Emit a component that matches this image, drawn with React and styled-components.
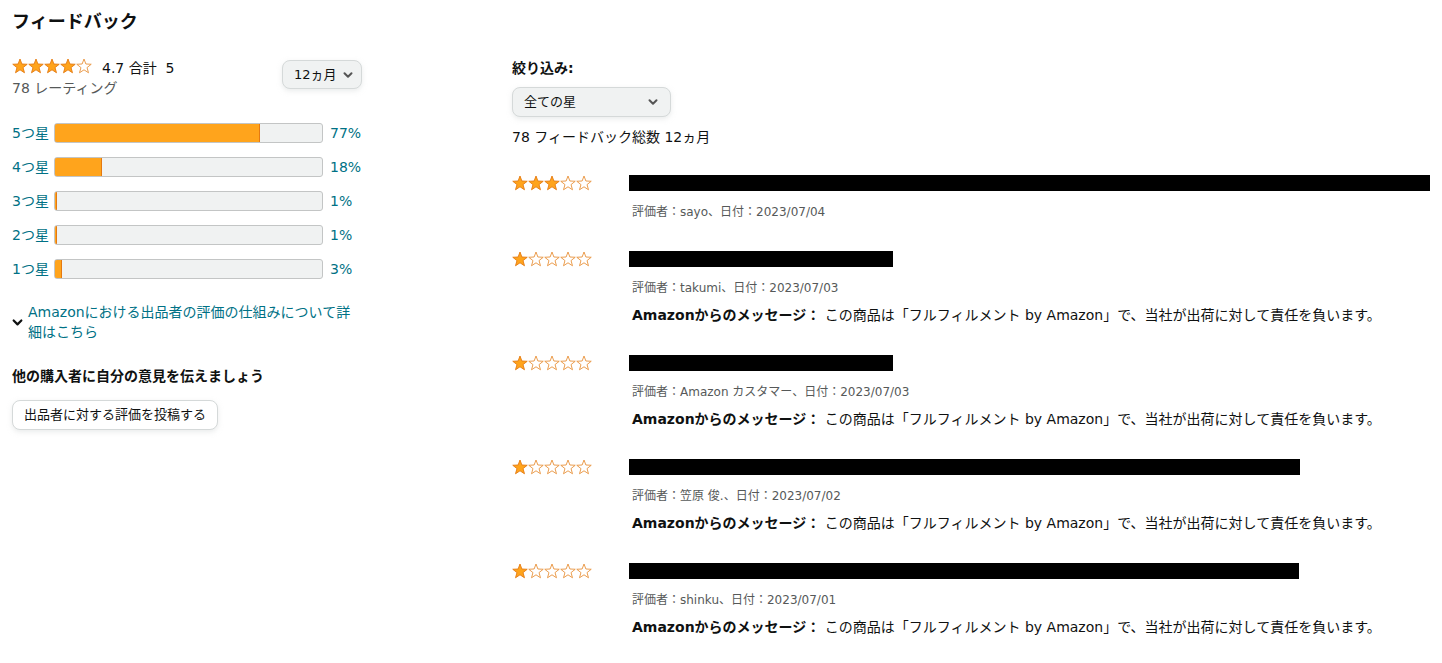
import React from "react"
import styled, { createGlobalStyle } from "styled-components"

const GlobalStyle = createGlobalStyle`
  html, body {
    margin: 0;
    padding: 0;
    background: #fff;
  }
  body {
    font-family: "DejaVu Sans", "Noto Sans CJK JP", sans-serif;
    color: #0F1111;
    font-size: 14px;
    line-height: 20px;
  }
`

const histogram = [
  { label: "5つ星", pct: 77 },
  { label: "4つ星", pct: 18 },
  { label: "3つ星", pct: 1 },
  { label: "2つ星", pct: 1 },
  { label: "1つ星", pct: 3 }
];

const MESSAGE = "この商品は「フルフィルメント by Amazon」で、当社が出荷に対して責任を負います。";

const reviews = [
  { stars: 3, redacted: 801, meta: "評価者：sayo、日付：2023/07/04", message: false },
  { stars: 1, redacted: 264, meta: "評価者：takumi、日付：2023/07/03", message: true },
  { stars: 1, redacted: 264, meta: "評価者：Amazon カスタマー、日付：2023/07/03", message: true },
  { stars: 1, redacted: 671, meta: "評価者：笠原 俊.、日付：2023/07/02", message: true },
  { stars: 1, redacted: 670, meta: "評価者：shinku、日付：2023/07/01", message: true }
];

const STAR = "8,1 9.88,6.01 15.23,6.25 11.04,9.59 12.47,14.75 8,11.8 3.53,14.75 4.96,9.59 0.77,6.25 6.12,6.01";

const Star = ({ filled }) => (
  <svg width="16" height="16" viewBox="0 0 16 16">
    <polygon points={ STAR }
      fill={ filled ? "#FFA41C" : "#fff" }
      stroke={ filled ? "#E47911" : "#E8923B" }
      strokeWidth="0.9"
      strokeLinejoin="round"/>
  </svg>
)

const Stars = ({ count }) => (
  <StarRow>
    { [0, 1, 2, 3, 4].map(i => <Star key={ i } filled={ i < count }/>) }
  </StarRow>
)

const Chevron = ({ size = 10 }) => (
  <svg width={ size } height={ size } viewBox="0 0 10 10">
    <path d="M1.5 3.2 L5 6.7 L8.5 3.2" fill="none" stroke="currentColor"
      strokeWidth="2" strokeLinecap="round" strokeLinejoin="round"/>
  </svg>
)

const App = () => (
  <>
    <GlobalStyle/>
    <Page>
      <Title>フィードバック</Title>
      <Columns>
        <Left>
          <Summary>
            <div>
              <RatingLine>
                <Stars count={ 4 }/>
                <span>4.7 合計&nbsp; 5</span>
              </RatingLine>
              <Muted>78 レーティング</Muted>
            </div>
            <DropButton $w={ 80 } $h={ 29 }>
              <span>12ヵ月</span>
              <Chevron/>
            </DropButton>
          </Summary>

          <Histogram>
            { histogram.map(h =>
              <HistRow key={ h.label }>
                <HistLabel>{ h.label }</HistLabel>
                <Track>
                  <Fill style={ { width: `${ Math.max(h.pct, 1) }%` } }/>
                </Track>
                <HistPct>{ h.pct }%</HistPct>
              </HistRow>
            ) }
          </Histogram>

          <Expander>
            <ExpanderIcon><Chevron size={ 11 }/></ExpanderIcon>
            <LinkText>Amazonにおける出品者の評価の仕組みについて詳細はこちら</LinkText>
          </Expander>

          <SubHeading>他の購入者に自分の意見を伝えましょう</SubHeading>
          <div>
            <PlainButton>出品者に対する評価を投稿する</PlainButton>
          </div>
        </Left>

        <Right>
          <SubHeading $tight>絞り込み:</SubHeading>
          <FilterWrap>
            <DropButton $w={ 159 } $h={ 30 } $pad={ 12 }>
              <span>全ての星</span>
              <Chevron/>
            </DropButton>
          </FilterWrap>
          <Total>78 フィードバック総数 12ヵ月</Total>

          <ReviewList>
            { reviews.map((r, i) =>
              <Review key={ i }>
                <Stars count={ r.stars }/>
                <ReviewBody>
                  <Redacted $w={ r.redacted }/>
                  <Meta>{ r.meta }</Meta>
                  { r.message &&
                    <Message><b>Amazonからのメッセージ：</b> { MESSAGE }</Message>
                  }
                </ReviewBody>
              </Review>
            ) }
          </ReviewList>
        </Right>
      </Columns>
    </Page>
  </>
)
export default App;

const Page = styled.div`
  padding: 9px 12px 0 12px;
`
const Title = styled.h2`
  margin: 0;
  font-size: 18px;
  line-height: 26px;
  font-weight: 700;
`
const Columns = styled.div`
  display: grid;
  grid-template-columns: 350px 1fr;
  column-gap: 150px;
  margin-top: 23px;
`
const Left = styled.div`
  display: flex;
  flex-direction: column;
`
const Summary = styled.div`
  display: flex;
  justify-content: space-between;
  align-items: flex-start;
`
const RatingLine = styled.div`
  display: flex;
  align-items: center;
  gap: 10px;
  height: 20px;
`
const StarRow = styled.span`
  display: inline-flex;
  align-self: flex-start;
  svg { display: block; }
`
const Muted = styled.div`
  color: #565959;
  line-height: 20px;
`
const DropButton = styled.div`
  display: flex;
  align-items: center;
  justify-content: space-between;
  box-sizing: border-box;
  width: ${ p => p.$w }px;
  height: ${ p => p.$h }px;
  margin-top: 2px;
  padding: 0 ${ p => p.$pad || 8 }px 0 11px;
  background: #F0F2F2;
  border: 1px solid #D5D9D9;
  border-radius: 8px;
  box-shadow: 0 2px 5px 0 rgba(213, 217, 217, .5);
  font-size: 13px;
  color: #0F1111;
  svg { color: #555; }
`
const Histogram = styled.div`
  display: flex;
  flex-direction: column;
  margin-top: 18px;
`
const HistRow = styled.div`
  display: flex;
  align-items: center;
  height: 34px;
  color: #007185;
`
const HistLabel = styled.span`
  width: 42px;
  flex: none;
`
const Track = styled.div`
  box-sizing: border-box;
  width: 269px;
  height: 20px;
  background: #F0F2F2;
  border: 1px solid #C3C5C5;
  border-radius: 3px;
  overflow: hidden;
`
const Fill = styled.div`
  box-sizing: border-box;
  margin: -1px 0 0 -1px;
  height: calc(100% + 2px);
  background: #FFA41C;
  border: 1px solid #E47911;
  border-radius: 3px 0 0 3px;
`
const HistPct = styled.span`
  margin-left: 7px;
`
const Expander = styled.div`
  display: flex;
  align-items: center;
  margin-top: 16px;
  width: 345px;
`
const ExpanderIcon = styled.span`
  flex: none;
  width: 16px;
  display: flex;
  color: #0F1111;
  svg { display: block; }
`
const LinkText = styled.span`
  color: #007185;
  line-height: 20px;
`
const SubHeading = styled.div`
  font-weight: 700;
  line-height: 20px;
  margin-top: ${ p => p.$tight ? "0" : "24px" };
`
const PlainButton = styled.span`
  display: inline-flex;
  align-items: center;
  box-sizing: border-box;
  height: 30px;
  margin-top: 14px;
  padding: 0 11px;
  background: #fff;
  border: 1px solid #D5D9D9;
  border-radius: 8px;
  box-shadow: 0 2px 5px 0 rgba(213, 217, 217, .5);
  font-size: 13px;
`
const Right = styled.div`
  display: flex;
  flex-direction: column;
`
const FilterWrap = styled.div`
  margin-top: 7px;
`
const Total = styled.div`
  margin-top: 10px;
`
const ReviewList = styled.div`
  display: flex;
  flex-direction: column;
  margin-top: 28px;
`
const Review = styled.div`
  display: grid;
  grid-template-columns: 117px 1fr;
  align-items: start;
  padding-bottom: 30px;
`
const ReviewBody = styled.div`
  display: flex;
  flex-direction: column;
`
const Redacted = styled.div`
  width: ${ p => p.$w }px;
  height: 16px;
  background: #000;
`
const Meta = styled.div`
  margin: 12px 0 0 3px;
  font-size: 12px;
  line-height: 18px;
  color: #565959;
`
const Message = styled.div`
  margin: 8px 0 0 3px;
  line-height: 20px;
  b { font-weight: 700; }
`
